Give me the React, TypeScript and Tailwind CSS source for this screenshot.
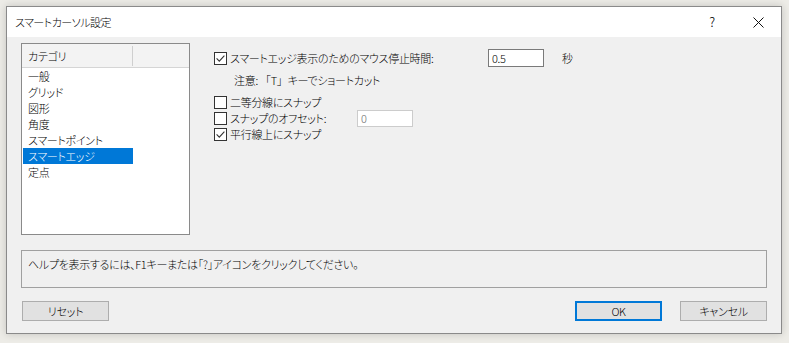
import { ReactNode } from 'react';

const categories = ['一般', 'グリッド', '図形', '角度', 'スマートポイント', 'スマートエッジ', '定点'];

const CheckBox = ({ checked }: { checked?: boolean }) => (
  <span className="flex h-[13px] w-[13px] shrink-0 items-center justify-center border border-[#333333] bg-white">
    {checked && (
      <svg width="11" height="11" viewBox="0 0 11 11">
        <path d="M1.6 5.4 L4.3 8.1 L9.4 2.6" stroke="#333333" strokeWidth="1.1" fill="none" />
      </svg>
    )}
  </span>
);

const CheckRow = ({ checked, label, width, children }: { checked?: boolean; label: string; width?: string; children?: ReactNode }) => (
  <div className="flex h-[16px] items-center">
    <div className={`flex items-center gap-[3px] ${width ?? ''}`}>
      <CheckBox checked={checked} />
      <span className="whitespace-nowrap">{label}</span>
    </div>
    {children}
  </div>
);

const Button = ({ label, primary }: { label: string; primary?: boolean }) => (
  <button
    className={`flex h-[20px] w-[87px] items-center justify-center bg-[#e1e1e1] ${
      primary ? 'border-2 border-[#0078d7]' : 'border border-[#adadad]'
    }`}
  >
    {label}
  </button>
);

export default function App() {
  return (
    <div className="h-[343px] w-[789px] bg-[#edece7] pl-[6px] pt-[6px] font-['Noto_Sans_CJK_JP','Liberation_Sans',sans-serif] text-[11px] leading-[16px] font-light tracking-[-0.3px] text-black [font-feature-settings:'palt']">
      <div className="flex h-[328px] w-[776px] flex-col border border-[#8a8a8a] bg-[#f0f0f0] shadow-[0_0_8px_rgba(0,0,0,0.18)]">
        {/* title bar */}
        <div className="flex h-[30px] items-center bg-white">
          <span className="flex-1 pl-[8px] tracking-[-0.5px]">スマートカーソル設定</span>
          <span className="flex h-[30px] w-[46px] items-center justify-center text-[13px]">?</span>
          <span className="flex h-[30px] w-[46px] items-center justify-center">
            <svg width="11" height="11" viewBox="0 0 11 11">
              <path d="M0.5 0.5 L10.5 10.5 M10.5 0.5 L0.5 10.5" stroke="#111" strokeWidth="1" />
            </svg>
          </span>
        </div>

        <div className="flex flex-col px-[14px] pt-[6px]">
          <div className="flex h-[192px]">
            {/* category list */}
            <div className="flex w-[169px] flex-col border border-[#8a8a8a] bg-white">
              <div className="flex h-[24px] items-center border-b border-[#d5d5d5] bg-[#f3f3f3]">
                <span className="w-[110px] pl-[6px]">カテゴリ</span>
                <span className="h-[20px] w-px bg-[#cfcfcf]" />
              </div>
              <ul className="flex flex-col">
                {categories.map((c) => (
                  <li
                    key={c}
                    className={`ml-px flex h-[16px] w-[110px] items-center pl-[5px] ${
                      c === 'スマートエッジ' ? 'bg-[#0078d7] text-white' : ''
                    }`}
                  >
                    {c}
                  </li>
                ))}
              </ul>
            </div>

            {/* options */}
            <div className="ml-[24px] flex flex-col">
              <div className="mt-[6px] flex h-[18px] items-center">
                <div className="flex w-[274px] items-center gap-[3px]">
                  <CheckBox checked />
                  <span className="whitespace-nowrap">スマートエッジ表示のためのマウス停止時間:</span>
                </div>
                <div className="flex h-[18px] w-[56px] items-center border border-[#7a7a7a] bg-white pl-[3px]">0.5</div>
                <span className="ml-[18px]">秒</span>
              </div>
              <div className="mt-[5px] flex h-[16px] items-center whitespace-pre pl-[20px]">
                注意: <span className="[font-feature-settings:normal]">「T」</span>キーでショートカット
              </div>
              <div className="mt-[6px]">
                <CheckRow label="二等分線にスナップ" />
              </div>
              <CheckRow label="スナップのオフセット:" width="w-[143px]">
                <div className="flex h-[17px] w-[56px] items-center border border-[#cccccc] bg-white pl-[3px] text-[#6d6d6d]">0</div>
              </CheckRow>
              <CheckRow checked label="平行線上にスナップ" />
            </div>
          </div>

          {/* help */}
          <div className="mt-[15px] flex h-[38px] w-[746px] items-start border border-[#a0a0a0] pl-[6px] pt-[5px]">
            ヘルプを表示するには、F1キーまたは「?」アイコンをクリックしてください。
          </div>

          {/* buttons */}
          <div className="mt-[13px] flex w-[746px] items-center">
            <div className="ml-px">
              <Button label="リセット" />
            </div>
            <div className="ml-auto flex gap-[18px]">
              <Button label="OK" primary />
              <Button label="キャンセル" />
            </div>
          </div>
        </div>
      </div>
    </div>
  );
}
